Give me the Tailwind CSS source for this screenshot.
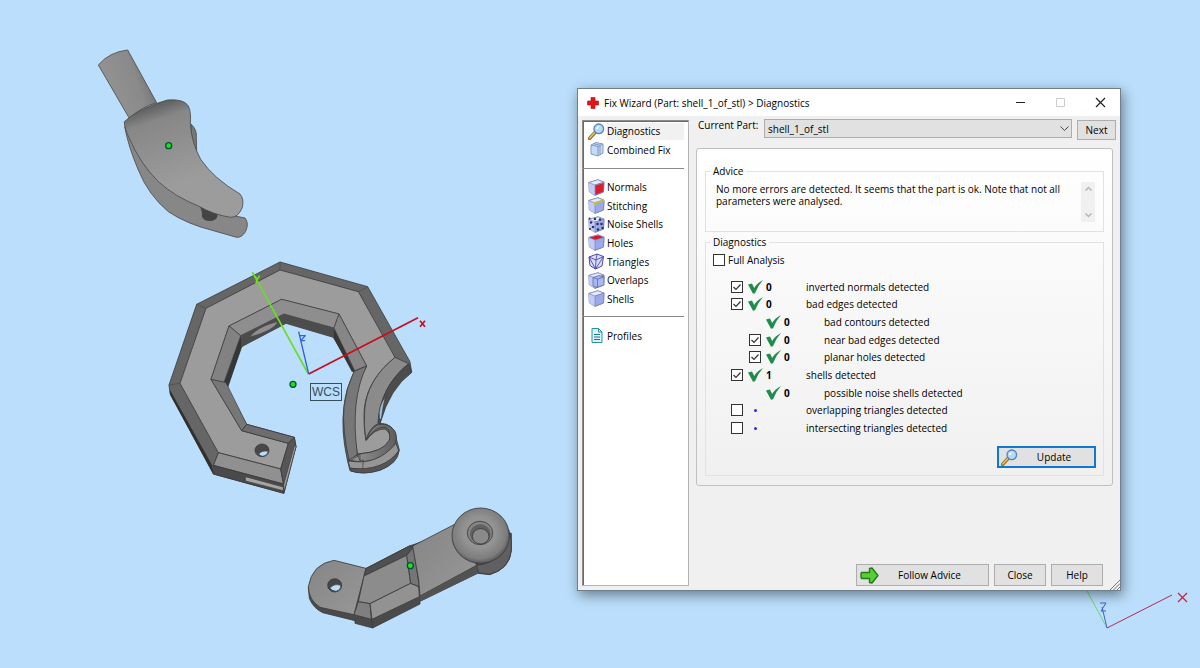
<!DOCTYPE html>
<html lang="en">
<head>
<meta charset="utf-8">
<title>Fix Wizard</title>
<script src="https://cdn.jsdelivr.net/npm/@tailwindcss/browser@4"></script>
</head>
<body class="relative min-h-screen overflow-hidden bg-[#badefb] font-['Open_Sans',sans-serif] text-[10px] leading-3 text-black">

<!-- 3D viewport -->
<svg class="absolute inset-0 h-full w-full" aria-label="3D view">
  <defs>
    <linearGradient id="rod" x1="0" y1="0.4" x2="1" y2="0"><stop offset="0.1" stop-color="#929292"/><stop offset="0.55" stop-color="#8a8a8a"/><stop offset="1" stop-color="#5f5f5f"/></linearGradient>
    <linearGradient id="claw" x1="0.1" y1="0" x2="0.35" y2="0.75"><stop offset="0.08" stop-color="#585858"/><stop offset="0.28" stop-color="#878787"/><stop offset="1" stop-color="#9c9c9c"/></linearGradient>
    <radialGradient id="knob" cx="0.48" cy="0.45" r="0.55"><stop offset="0.5" stop-color="#939393"/><stop offset="0.85" stop-color="#7d7d7d"/><stop offset="1" stop-color="#585858"/></radialGradient>
    <linearGradient id="arm" x1="0" y1="0" x2="1" y2="1"><stop offset="0" stop-color="#858585"/><stop offset="1" stop-color="#989898"/></linearGradient>
    <linearGradient id="hook" x1="0" y1="0" x2="1" y2="0"><stop offset="0" stop-color="#9a9a9a"/><stop offset="1" stop-color="#5e5e5e"/></linearGradient>
  </defs>

  <!-- claw -->
  <g transform="translate(80 30) scale(.33333)" stroke="#4a4a4a" stroke-width="2.500" stroke-linejoin="round">
    <path fill="url(#rod)" d="M55 105Q88 66 143 60L230 218Q185 230 148 265Z"/>
    <path fill="#777" d="M333 282Q352 300 349 322L350 366L336 330Z"/>
    <path fill="#878787" d="M134 290Q145 350 175 420Q205 495 265 545Q320 582 400 602L470 622Q486 623 497 604Q508 580 495 564L455 556L360 500L260 420L180 320Z"/>
    <path fill="#444" stroke="none" d="M358 526Q368 545 366 560Q374 574 390 573Q408 572 412 560L414 540Z"/>
    <path fill="url(#claw)" d="M133 275Q175 235 262 210Q312 206 325 228Q334 245 331 285Q336 340 362 388Q400 445 480 492Q493 508 487 532Q476 562 452 562Q400 554 355 528Q285 500 235 455Q180 400 148 325Q133 295 133 275Z"/>
    <circle cx="266" cy="347" r="9" fill="#1fe01f" stroke="#053" stroke-width="4"/>
  </g>

  <!-- ring -->
  <g transform="translate(150 250) scale(.33333)" stroke="#3c3c3c" stroke-width="2.500" stroke-linejoin="round">
    <path fill="#666" d="M390 36L653 110L780 335L785 367Q715 415 690 520Q735 520 740 570L748 600Q738 640 690 660Q640 676 600 662L592 630Q572 540 582 470Q586 420 612 368L550 262L408 220L275 290L232 415L290 523L433 562L438 590L402 730L190 672L60 430L57 405L140 163Z"/>
    <path fill="#303030" stroke="none" d="M60 420L186 645L190 672L60 434Z"/>
    <path fill="#9c9c9c" d="M390 60L625 125L735 322Q640 400 642 500Q642 545 648 572Q675 535 705 537Q726 550 718 574Q700 606 622 612Q600 500 620 425Q630 380 650 348L567 192L395 148L237 228L183 388L275 542L415 580L392 657L205 608L90 400L168 175Z"/>
    <path fill="#8e8e8e" stroke-width="2" d="M395 148L567 192L552 234L402 192L272 257L237 228Z"/>
    <path fill="#4c4c4c" stroke="none" d="M402 192L552 234L550 262L408 220L275 290L272 257Z"/>
    <path fill="#8e8e8e" stroke-width="2" d="M298 262Q320 230 384 214Q378 240 298 262Z"/>
    <path fill="#363636" stroke="none" d="M272 257L275 290L232 415L222 397Z M552 234L616 362L606 366L550 262Z"/>
    <path fill="#828282" stroke-width="2" d="M237 228L272 257L222 397L183 388Z"/>
    <path fill="#777" stroke-width="2" d="M183 388L228 398L290 523L275 542Z"/>
    <path fill="#868686" stroke-width="2" d="M567 192L650 348L614 362L552 234Z"/>
    <path fill="#777" d="M650 348Q600 450 622 612L598 634Q576 540 582 470Q588 415 612 364Z"/>
    <path fill="#909090" d="M205 608L392 657L400 702L190 646Z"/>
    <path fill="#6d6d6d" d="M275 542L290 523L433 562L415 580Z"/>
    <path fill="#565656" d="M415 580L433 562L438 590L402 706L392 657Z"/>
    <path fill="#4a4a4a" d="M190 646L400 702L402 730L190 672Z"/>
    <path fill="#a5a5a5" stroke-width="2" d="M286 680L400 711V722L286 693Z M403 722L438 590L434 585L401 704Z"/>
    <path fill="#8b8b8b" d="M735 322L776 341Q690 410 686 520Q660 530 648 570Q640 530 644 480Q650 390 735 322Z"/>
    <path fill="#4c4c4c" d="M776 341L785 367Q720 415 690 520L684 518Q690 410 776 341Z"/>
    <path fill="#9fc0da" stroke-width="2" d="M688 506Q684 470 706 440Q698 470 694 508Z"/>
    <path fill="url(#hook)" d="M650 568Q678 526 708 532Q724 545 718 570Q700 606 628 612L596 630Q670 652 730 592Q746 565 734 542Q712 516 682 525Q660 538 650 568Z"/>
    <path fill="#969696" d="M594 632Q680 650 738 580L746 602Q728 642 680 656Q640 664 600 654Z"/>
    <path fill="#555" d="M600 655Q700 665 747 602Q744 640 690 661Q640 676 602 663Z"/>
    <path fill="none" stroke-width="2" d="M622 612L630 632L640 630L638 656M598 634L628 616M630 612V632"/>
    <path fill="none" stroke="#484848" stroke-width="2" d="M390 36V60M140 163L168 175M57 405L90 400M205 608L190 646M653 110L625 125"/>
    <ellipse cx="336" cy="601" rx="21" ry="19" fill="#484848"/>
    <path fill="#badefb" stroke-width="2" d="M326 612Q336 600 355 604Q352 617 338 619Q330 617 326 612Z"/>
    <circle cx="429" cy="403" r="9" fill="#1fe01f" stroke="#053" stroke-width="4"/>
    <g fill="none" stroke-width="5">
      <path stroke="#c80e1d" d="M476 372L804 203"/>
      <path stroke="#6bdd27" d="M475 372L307 66M312 76L322 88L329 77M322 88L318 100"/>
      <path stroke="#2f62dc" d="M476 372L446 245M450 257H466L452 272H465" stroke-width="4"/>
      <path stroke="#c80e1d" d="M810 212L825 230M825 212L810 230"/>
    </g>
  </g>
  <rect x="310.500" y="383.500" width="31" height="17" fill="none" stroke="#34505f"/>
  <text x="312" y="396" font-family="Liberation Sans, sans-serif" font-size="12" fill="#34505f">WCS</text>

  <!-- link arm -->
  <g transform="translate(290 490) scale(.33333)" stroke="#3c3c3c" stroke-width="2.500" stroke-linejoin="round">
    <path fill="#4a4a4a" d="M55 290L58 325Q70 355 98 368L195 392V400L248 414L390 342V334L562 250L600 254Q660 235 664 182V130L560 100L358 168L228 235Z"/>
    <path fill="url(#arm)" d="M132 211L228 235L192 374L90 352Q56 330 55 290Q66 222 132 211Z"/>
    <path fill="#505050" d="M228 236L358 168L370 172L350 196L222 258Z"/>
    <path fill="#8c8c8c" d="M222 258L350 196L362 280L240 341L205 335Z"/>
    <path fill="#7f7f7f" d="M205 335L240 341L244 388L192 374Z"/>
    <path fill="#929292" d="M240 341L362 280L386 290L388 320L246 388Z"/>
    <path fill="#757575" d="M350 196L370 172L388 290L362 280Z"/>
    <path fill="url(#arm)" d="M368 168L492 104L560 226L390 318L386 270Z"/>
    <path fill="#525252" stroke="none" d="M390 318L562 226L566 250L392 334Z"/>
    <path fill="none" d="M244 388L248 414"/>
    <path fill="#606060" d="M560 226Q640 220 656 120L664 150V182Q656 240 598 253L566 248Z"/>
    <ellipse cx="572" cy="137" rx="86" ry="83" fill="url(#knob)"/>
    <ellipse cx="570" cy="129" rx="38" ry="35" fill="#858585"/>
    <ellipse cx="571" cy="132" rx="31" ry="29" fill="#606060" stroke="none"/>
    <ellipse cx="572" cy="139" rx="25" ry="23" fill="#8a8a8a"/>
    <ellipse cx="134" cy="286" rx="21" ry="20" fill="#464646"/>
    <path fill="#badefb" stroke-width="2" d="M120 295Q132 279 152 286Q154 299 138 304Q126 303 120 295Z"/>
    <circle cx="361" cy="227" r="9" fill="#1fe01f" stroke="#053" stroke-width="4"/>
  </g>

  <!-- corner axes -->
  <g fill="none">
    <path stroke="#70d867" d="M1080 578L1107 628"/>
    <path stroke="#3c62d8" d="M1107 628L1102 607M1100 603H1106L1101 611H1106"/>
    <path stroke="#b5285a" d="M1107 628L1172 595"/>
    <path stroke="#c8243c" stroke-width="1.300" d="M1178 593L1187 602M1187 593L1178 602"/>
  </g>
</svg>

<!-- shared symbols -->
<svg class="absolute h-0 w-0" aria-hidden="true">
  <defs>
    <linearGradient id="face" x1="0" y1="0" x2="1" y2="1"><stop offset="0" stop-color="#d6ddfa"/><stop offset="1" stop-color="#8f9ce0"/></linearGradient>
    <symbol id="lens" viewBox="0 0 17 17">
      <path d="M1.500 15.500L7 9.500" stroke="#8d7132" stroke-width="3.400" stroke-linecap="round"/>
      <path d="M1.700 15L6.700 9.600" stroke="#e9bd5c" stroke-width="1.600" stroke-linecap="round"/>
      <circle cx="10.800" cy="5.800" r="4.800" fill="#b4d8f6" stroke="#5384b8" stroke-width="1.300"/>
      <path d="M8 6Q9 3 12 3Q10 4 10 6Z" fill="#fff"/>
    </symbol>
    <symbol id="cube" viewBox="0 0 17 17">
      <path d="M.8 3.500L10 .8L16 3.200L15.500 13L7 16.300L1.300 12.800Z" fill="url(#face)" stroke="#7078ae" stroke-width=".8"/>
      <path d="M.8 3.500L7 6V16.300L1.300 12.800Z" fill="#c2cbf6"/>
      <path d="M.8 3.500L10 .8L16 3.200L7 6Z" fill="#e6ebfd" stroke="#7078ae" stroke-width=".6"/>
      <path d="M7 6V16.300L15.500 13L16 3.200Z" fill="#9ba8ea" stroke="#7078ae" stroke-width=".6"/>
    </symbol>
    <symbol id="tick" viewBox="0 0 15 14">
      <path d="M0 4.500L4 3.500L6.200 8Q9 3 15 0Q9.500 6 7 13.300L5 13.800Z" fill="#1f8c4b"/>
    </symbol>
    <symbol id="check" viewBox="0 0 12 12">
      <path d="M2.500 6L5 8.500L9.500 3.500" fill="none" stroke="#333" stroke-width="1.200"/>
    </symbol>
  </defs>
</svg>

<!-- Fix Wizard window -->
<main class="absolute left-[577px] top-[88px] flex h-[503px] w-[544px] flex-col border border-[#6f7f8c] bg-[#f0f0f0] shadow-[2px_4px_12px_rgba(0,0,0,.45)]">
  <header class="flex h-[27px] shrink-0 items-center bg-white pl-[9px]">
    <svg class="h-3 w-3" viewBox="0 0 12 12"><path d="M4 .5H8V4H11.500V8H8V11.500H4V8H.5V4H4Z" fill="#e3131b" stroke="#b30d12" stroke-width=".6"/></svg>
    <h1 class="ml-[5px] flex-1 whitespace-nowrap">Fix Wizard (Part: shell_1_of_stl) &gt; Diagnostics</h1>
    <button class="grid h-full w-10 place-items-center" aria-label="Minimize"><svg class="h-[11px] w-[11px]"><path d="M1 5.500H10" stroke="#222"/></svg></button>
    <button class="grid h-full w-10 place-items-center" aria-label="Maximize" disabled><svg class="h-[11px] w-[11px]"><path d="M1.500 1.500H9.500V9.500H1.500Z" fill="none" stroke="#ccc"/></svg></button>
    <button class="grid h-full w-10 place-items-center" aria-label="Close window"><svg class="h-[11px] w-[11px]"><path d="M1 1L10 10M10 1L1 10" stroke="#222" stroke-width="1.200"/></svg></button>
  </header>

  <div class="flex min-h-0 flex-1">
    <nav class="mb-1 ml-1 mt-1 w-[107px] shrink-0 border border-[#8c8c8c] border-r-[#b4b4b4] border-b-[#b4b4b4] bg-white leading-4 shadow-[inset_1px_1px_0_#696969]">
      <div class="mr-1 mt-px grid h-[37px] grid-rows-2 pl-[5px]">
        <a href="#" class="flex items-center gap-[2px]"><svg class="h-[17px] w-[17px] shrink-0"><use href="#lens"/></svg><span class="flex h-[17px] flex-1 items-center bg-[#f1f1f1]">Diagnostics</span></a>
        <a href="#" class="flex items-center gap-[2px] whitespace-nowrap"><svg class="h-[17px] w-[17px] shrink-0" viewBox="0 0 17 17"><path d="M3 4L8 1.500L15 3V12L10 15L3 13Z" fill="#c7daf5" stroke="#7c9bc6"/><path d="M3 4L10 5.500V15M10 5.500L15 3M5.500 2.700L12 4.200V13.500" fill="none" stroke="#7c9bc6"/></svg>Combined Fix</a>
      </div>
      <hr class="mr-1 mt-[9px] border-[#8a8a8a]">
      <div class="mt-[9px] grid h-[130px] grid-rows-7 whitespace-nowrap pl-[5px]">
        <a href="#" class="flex items-center gap-[2px]"><svg class="h-[17px] w-[17px] shrink-0" viewBox="0 0 17 17"><use href="#cube"/><path d="M7.300 6.500L15.700 4L15.200 12.800L7.300 15.800Z" fill="#d8202a"/></svg>Normals</a>
        <a href="#" class="flex items-center gap-[2px]"><svg class="h-[17px] w-[17px] shrink-0" viewBox="0 0 17 17"><use href="#cube"/><path d="M7 9V6L16 3.200" stroke="#c4bf3c" stroke-width="2" fill="none"/></svg>Stitching</a>
        <a href="#" class="flex items-center gap-[2px]"><svg class="h-[17px] w-[17px] shrink-0" viewBox="0 0 17 17"><use href="#cube"/><g fill="#26306b"><circle cx="3" cy="6.500" r="1.200"/><circle cx="5" cy="11" r="1.300"/><circle cx="7" cy="3" r="1.200"/><circle cx="12" cy="3.500" r="1.200"/><circle cx="9.500" cy="8" r="1.300"/><circle cx="13.500" cy="8" r="1.300"/><circle cx="10" cy="13.500" r="1.300"/><circle cx="14.500" cy="12" r="1.200"/><circle cx="2" cy="13" r="1"/><circle cx="1.500" cy="2.500" r="1"/></g></svg>Noise Shells</a>
        <a href="#" class="flex items-center gap-[2px]"><svg class="h-[17px] w-[17px] shrink-0" viewBox="0 0 17 17"><use href="#cube"/><path d="M1.500 3.500L10 1.200L15.500 3.200L7 5.700Z" fill="#d3182c"/></svg>Holes</a>
        <a href="#" class="flex items-center gap-[2px]"><svg class="h-[17px] w-[17px] shrink-0" viewBox="0 0 17 17"><path d="M1 4L9 1L15.500 3.500L14 13L7.500 16L2 12.500Z" fill="#dcdffb" stroke="#4d49ae"/><path d="M1 4L8 7L15.500 3.500M8 7L7.500 16M1 4L7.500 16L15.500 3.500M9 1L8 7" fill="none" stroke="#4d49ae" stroke-width=".9"/></svg>Triangles</a>
        <a href="#" class="flex items-center gap-[2px]"><svg class="h-[17px] w-[17px] shrink-0" viewBox="0 0 17 17"><use href="#cube"/><path d="M5 5.500L11 3.500L16 5V13L9 15.500L5 14Z" fill="#a9b8ef" stroke="#5c69a8" stroke-width=".8"/><path d="M5 5.500L9.500 7L16 5M9.500 7V15.200" fill="none" stroke="#5c69a8" stroke-width=".8"/></svg>Overlaps</a>
        <a href="#" class="flex items-center gap-[2px]"><svg class="h-[17px] w-[17px] shrink-0"><use href="#cube"/></svg>Shells</a>
      </div>
      <hr class="mr-1 mt-[8px] border-[#8a8a8a]">
      <a href="#" class="ml-[5px] mt-[10px] flex items-center gap-[2px]"><svg class="h-[17px] w-[17px] shrink-0" viewBox="0 0 17 17"><path d="M4 1.500H10.500L14 5V15.500H4Z" fill="#d9f3fa" stroke="#2e8fa8"/><path d="M10.500 1.500V5H14" fill="none" stroke="#2e8fa8"/><path d="M6 7.500H12M6 10H12M6 12.500H12" stroke="#1d7690" stroke-width="1.200"/></svg>Profiles</a>
    </nav>

    <section class="flex min-w-0 flex-1 flex-col px-[7px]">
      <div class="mr-[-3px] flex items-start pt-[3px]">
        <label for="part" class="w-[68px] whitespace-nowrap pl-[2px]">Current Part:</label>
        <div class="relative flex-1">
          <select id="part" class="block h-[19px] w-full appearance-none border border-[#adadad] bg-[#e1e1e1] pl-[3px]"><option>shell_1_of_stl</option></select>
          <svg class="pointer-events-none absolute right-[3px] top-[6px] h-[7px] w-[9px]"><path d="M.5 1.500L4.500 5.500L8.500 1.500" fill="none" stroke="#444"/></svg>
        </div>
        <button class="ml-[5px] mt-px h-5 w-[39px] border border-[#adadad] bg-[#e1e1e1]">Next</button>
      </div>

      <div class="mt-2 rounded-[3px] border border-[#c0c0c0] bg-linear-to-b from-white to-[#f0f0f0] px-2 pb-[9px] pt-4">
        <fieldset class="h-[67px] border border-[#e2e2e2]">
          <legend class="ml-1 px-[3px]">Advice</legend>
          <div class="flex items-start pl-[10px] pr-2">
            <p class="flex-1 pt-[6px]">No more errors are detected. It seems that the part is ok. Note that not all<br>parameters were analysed.</p>
            <div class="mt-[5px] flex h-10 w-[14px] flex-col items-center justify-between bg-[#f0f0f0] py-1">
              <svg class="h-[6px] w-[7px]"><path d="M.5 4.500L3.500 1.500L6.500 4.500" fill="none" stroke="#b5b5b5" stroke-width="1.500"/></svg>
              <svg class="h-[6px] w-[7px]"><path d="M.5 1.500L3.500 4.500L6.500 1.500" fill="none" stroke="#b5b5b5" stroke-width="1.500"/></svg>
            </div>
          </div>
        </fieldset>

        <fieldset class="mt-1 h-[240px] border border-[#e2e2e2]">
          <legend class="ml-1 px-[3px]">Diagnostics</legend>
          <label class="ml-[7px] mt-[6px] flex items-center gap-[3px]"><input type="checkbox" class="h-3 w-3 appearance-none border border-[#333] bg-white">Full Analysis</label>

          <div class="ml-[25px] mt-[12px] grid h-[159px] grid-rows-9">
            <div class="flex items-center"><span class="relative flex"><input id="c1" type="checkbox" checked class="peer h-3 w-3 appearance-none border border-[#333] bg-white"><svg class="pointer-events-none absolute inset-0 hidden h-3 w-3 peer-checked:block"><use href="#check"/></svg></span><svg class="ml-[5px] h-[14px] w-[15px]"><use href="#tick"/></svg><b class="ml-[3px] w-10">0</b><label for="c1">inverted normals detected</label></div>
            <div class="flex items-center"><span class="relative flex"><input id="c2" type="checkbox" checked class="peer h-3 w-3 appearance-none border border-[#333] bg-white"><svg class="pointer-events-none absolute inset-0 hidden h-3 w-3 peer-checked:block"><use href="#check"/></svg></span><svg class="ml-[5px] h-[14px] w-[15px]"><use href="#tick"/></svg><b class="ml-[3px] w-10">0</b><label for="c2">bad edges detected</label></div>
            <div class="flex items-center pl-[30px]"><svg class="ml-[5px] h-[14px] w-[15px]"><use href="#tick"/></svg><b class="ml-[3px] w-10">0</b><span>bad contours detected</span></div>
            <div class="flex items-center pl-[18px]"><span class="relative flex"><input id="c4" type="checkbox" checked class="peer h-3 w-3 appearance-none border border-[#333] bg-white"><svg class="pointer-events-none absolute inset-0 hidden h-3 w-3 peer-checked:block"><use href="#check"/></svg></span><svg class="ml-[5px] h-[14px] w-[15px]"><use href="#tick"/></svg><b class="ml-[3px] w-10">0</b><label for="c4">near bad edges detected</label></div>
            <div class="flex items-center pl-[18px]"><span class="relative flex"><input id="c5" type="checkbox" checked class="peer h-3 w-3 appearance-none border border-[#333] bg-white"><svg class="pointer-events-none absolute inset-0 hidden h-3 w-3 peer-checked:block"><use href="#check"/></svg></span><svg class="ml-[5px] h-[14px] w-[15px]"><use href="#tick"/></svg><b class="ml-[3px] w-10">0</b><label for="c5">planar holes detected</label></div>
            <div class="flex items-center"><span class="relative flex"><input id="c6" type="checkbox" checked class="peer h-3 w-3 appearance-none border border-[#333] bg-white"><svg class="pointer-events-none absolute inset-0 hidden h-3 w-3 peer-checked:block"><use href="#check"/></svg></span><svg class="ml-[5px] h-[14px] w-[15px]"><use href="#tick"/></svg><b class="ml-[3px] w-10">1</b><label for="c6">shells detected</label></div>
            <div class="flex items-center pl-[30px]"><svg class="ml-[5px] h-[14px] w-[15px]"><use href="#tick"/></svg><b class="ml-[3px] w-10">0</b><span>possible noise shells detected</span></div>
            <div class="flex items-center"><input id="c8" type="checkbox" class="h-3 w-3 appearance-none border border-[#333] bg-white"><i class="ml-[11px] mr-[49px] h-[3px] w-[3px] rounded-full bg-[#2d2de0]"></i><label for="c8">overlapping triangles detected</label></div>
            <div class="flex items-center"><input id="c9" type="checkbox" class="h-3 w-3 appearance-none border border-[#333] bg-white"><i class="ml-[11px] mr-[49px] h-[3px] w-[3px] rounded-full bg-[#2d2de0]"></i><label for="c9">intersecting triangles detected</label></div>
          </div>
          <button class="ml-auto mr-[7px] mt-[9px] flex h-[22px] w-[99px] items-center border-2 border-[#1078cf] bg-[#e1e1e1] pl-[2px]"><svg class="h-[17px] w-[17px]"><use href="#lens"/></svg><span class="flex-1 pr-1">Update</span></button>
        </fieldset>
      </div>

      <footer class="mb-1 mr-[10px] mt-auto flex justify-end gap-[5px]">
        <button class="flex h-[22px] w-[133px] items-center border border-[#adadad] bg-[#e1e1e1] pl-[3px]"><svg class="h-[17px] w-[19px]" viewBox="0 0 19 17"><path d="M1.500 5.500H9.500V1.500L12 1L18 8.500L12 16L9.500 15.500V11.500H1.500L1 10V7Z" fill="#55cf35" stroke="#277a1c" stroke-width="1.400" stroke-linejoin="round"/></svg><span class="flex-1 pr-2">Follow Advice</span></button>
        <button class="h-[22px] w-[52px] border border-[#adadad] bg-[#e1e1e1]">Close</button>
        <button class="h-[22px] w-[52px] border border-[#adadad] bg-[#e1e1e1]">Help</button>
      </footer>
    </section>
  </div>
  <svg class="absolute bottom-0 right-0 h-[11px] w-[11px]"><path d="M1 11L11 1M4.500 11L11 4.500M8 11L11 8" stroke="#777"/></svg>
</main>
</body>
</html>
